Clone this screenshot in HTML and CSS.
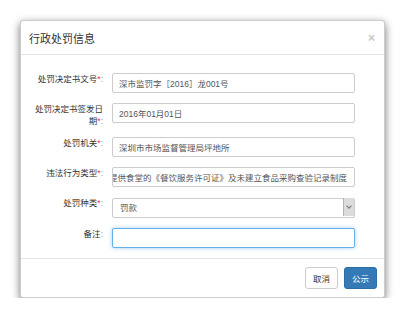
FILE: index.html
```html
<!DOCTYPE html>
<html>
<head>
    <meta charset="utf-8">
    <title>行政处罚信息</title>
    <link rel="stylesheet" href="styles.css">
</head>
<body>
    <div class="modal">
        <div class="modal-header">
            <h4 class="modal-title">行政处罚信息</h4>
            <span class="close">&times;</span>
        </div>

        <div class="modal-body">
            <div class="form-group">
                <label>处罚决定书文号<span class="req">*</span><span class="colon">:</span></label>
                <input type="text" class="form-control" value="深市监罚字［2016］龙001号">
            </div>
            <div class="form-group">
                <label>处罚决定书签发日期<span class="req">*</span><span class="colon">:</span></label>
                <input type="text" class="form-control" value="2016年01月01日">
            </div>
            <div class="form-group">
                <label>处罚机关<span class="req">*</span><span class="colon">:</span></label>
                <input type="text" class="form-control" value="深圳市市场监督管理局坪地所">
            </div>
            <div class="form-group">
                <label>违法行为类型<span class="req">*</span><span class="colon">:</span></label>
                <div class="form-control scrolled">
                    <span>未能提供食堂的《餐饮服务许可证》及未建立食品采购查验记录制度</span>
                </div>
            </div>
            <div class="form-group">
                <label>处罚种类<span class="req">*</span><span class="colon">:</span></label>
                <div class="select-wrap">
                    <select class="form-control">
                        <option>罚款</option>
                    </select>
                    <span class="select-arrow"></span>
                </div>
            </div>
            <div class="form-group">
                <label>备注<span class="colon">:</span></label>
                <input type="text" class="form-control focused">
            </div>
        </div>

        <div class="modal-footer">
            <button class="btn btn-default">取消</button>
            <button class="btn btn-primary">公示</button>
        </div>
    </div>
</body>
</html>
```

FILE: styles.css
```css
* {
    margin: 0;
    padding: 0;
    box-sizing: border-box;
    font-family: "Liberation Sans", "Noto Sans CJK SC", sans-serif;
}

body {
    background-color: #fff;
    color: #333;
    padding: 20px 0 0 20px;
}

.modal {
    width: 365px;
    background: #fff;
    border: 1px solid rgba(0,0,0,0.2);
    border-radius: 3px;
    box-shadow: 0 3px 8px rgba(0,0,0,0.55);
}

.modal-header {
    height: 34px;
    padding: 0 9px 0 8px;
    display: flex;
    justify-content: space-between;
    align-items: center;
    border-bottom: 1px solid #e5e5e5;
}

.modal-title {
    font-size: 11px;
    font-weight: normal;
    color: #333;
}

.close {
    font-size: 12px;
    font-weight: bold;
    color: #c8c8c8;
    line-height: 1;
}

.modal-body {
    padding: 18px 0 0 12px;
}

.form-group {
    display: flex;
    align-items: flex-start;
    margin-bottom: 10px;
}

label {
    width: 70px;
    margin-right: 9px;
    text-align: right;
    font-size: 8.5px;
    line-height: 12px;
    color: #333;
}

.req {
    color: #e4393c;
}

.colon {
    color: #999;
}

.form-control {
    width: 243px;
    height: 20px;
    padding: 0 6px;
    border: 1px solid #ccc;
    border-radius: 2px;
    font-size: 8.5px;
    color: #555;
    background: #fff;
    outline: none;
}

.scrolled {
    display: flex;
    justify-content: flex-end;
    align-items: center;
    overflow: hidden;
    white-space: nowrap;
    padding-right: 7px;
}

.scrolled span {
    flex-shrink: 0;
}

.select-wrap {
    position: relative;
}

select.form-control {
    appearance: none;
    -webkit-appearance: none;
    padding-left: 7px;
}

.select-arrow {
    position: absolute;
    top: 1px;
    right: 1px;
    width: 11px;
    height: 18px;
    background: #dcdcdc;
    border-left: 1px solid #b5b5b5;
}

.select-arrow::after {
    content: "";
    position: absolute;
    left: 3px;
    top: 6px;
    width: 3px;
    height: 3px;
    border-right: 1px solid #777;
    border-bottom: 1px solid #777;
    transform: rotate(45deg);
}

.focused {
    border-color: #66afe9;
    box-shadow: 0 0 4px rgba(102,175,233,0.6);
}

.modal-footer {
    display: flex;
    justify-content: flex-end;
    gap: 6px;
    padding: 8px 7px 8px 0;
    border-top: 1px solid #e5e5e5;
}

.btn {
    width: 33px;
    height: 22px;
    font-size: 8.5px;
    border-radius: 3px;
    border: 1px solid transparent;
    cursor: pointer;
}

.btn-default {
    background: #fff;
    border-color: #ccc;
    color: #333;
}

.btn-primary {
    background: #337ab7;
    border-color: #2e6da4;
    color: #fff;
}
```
